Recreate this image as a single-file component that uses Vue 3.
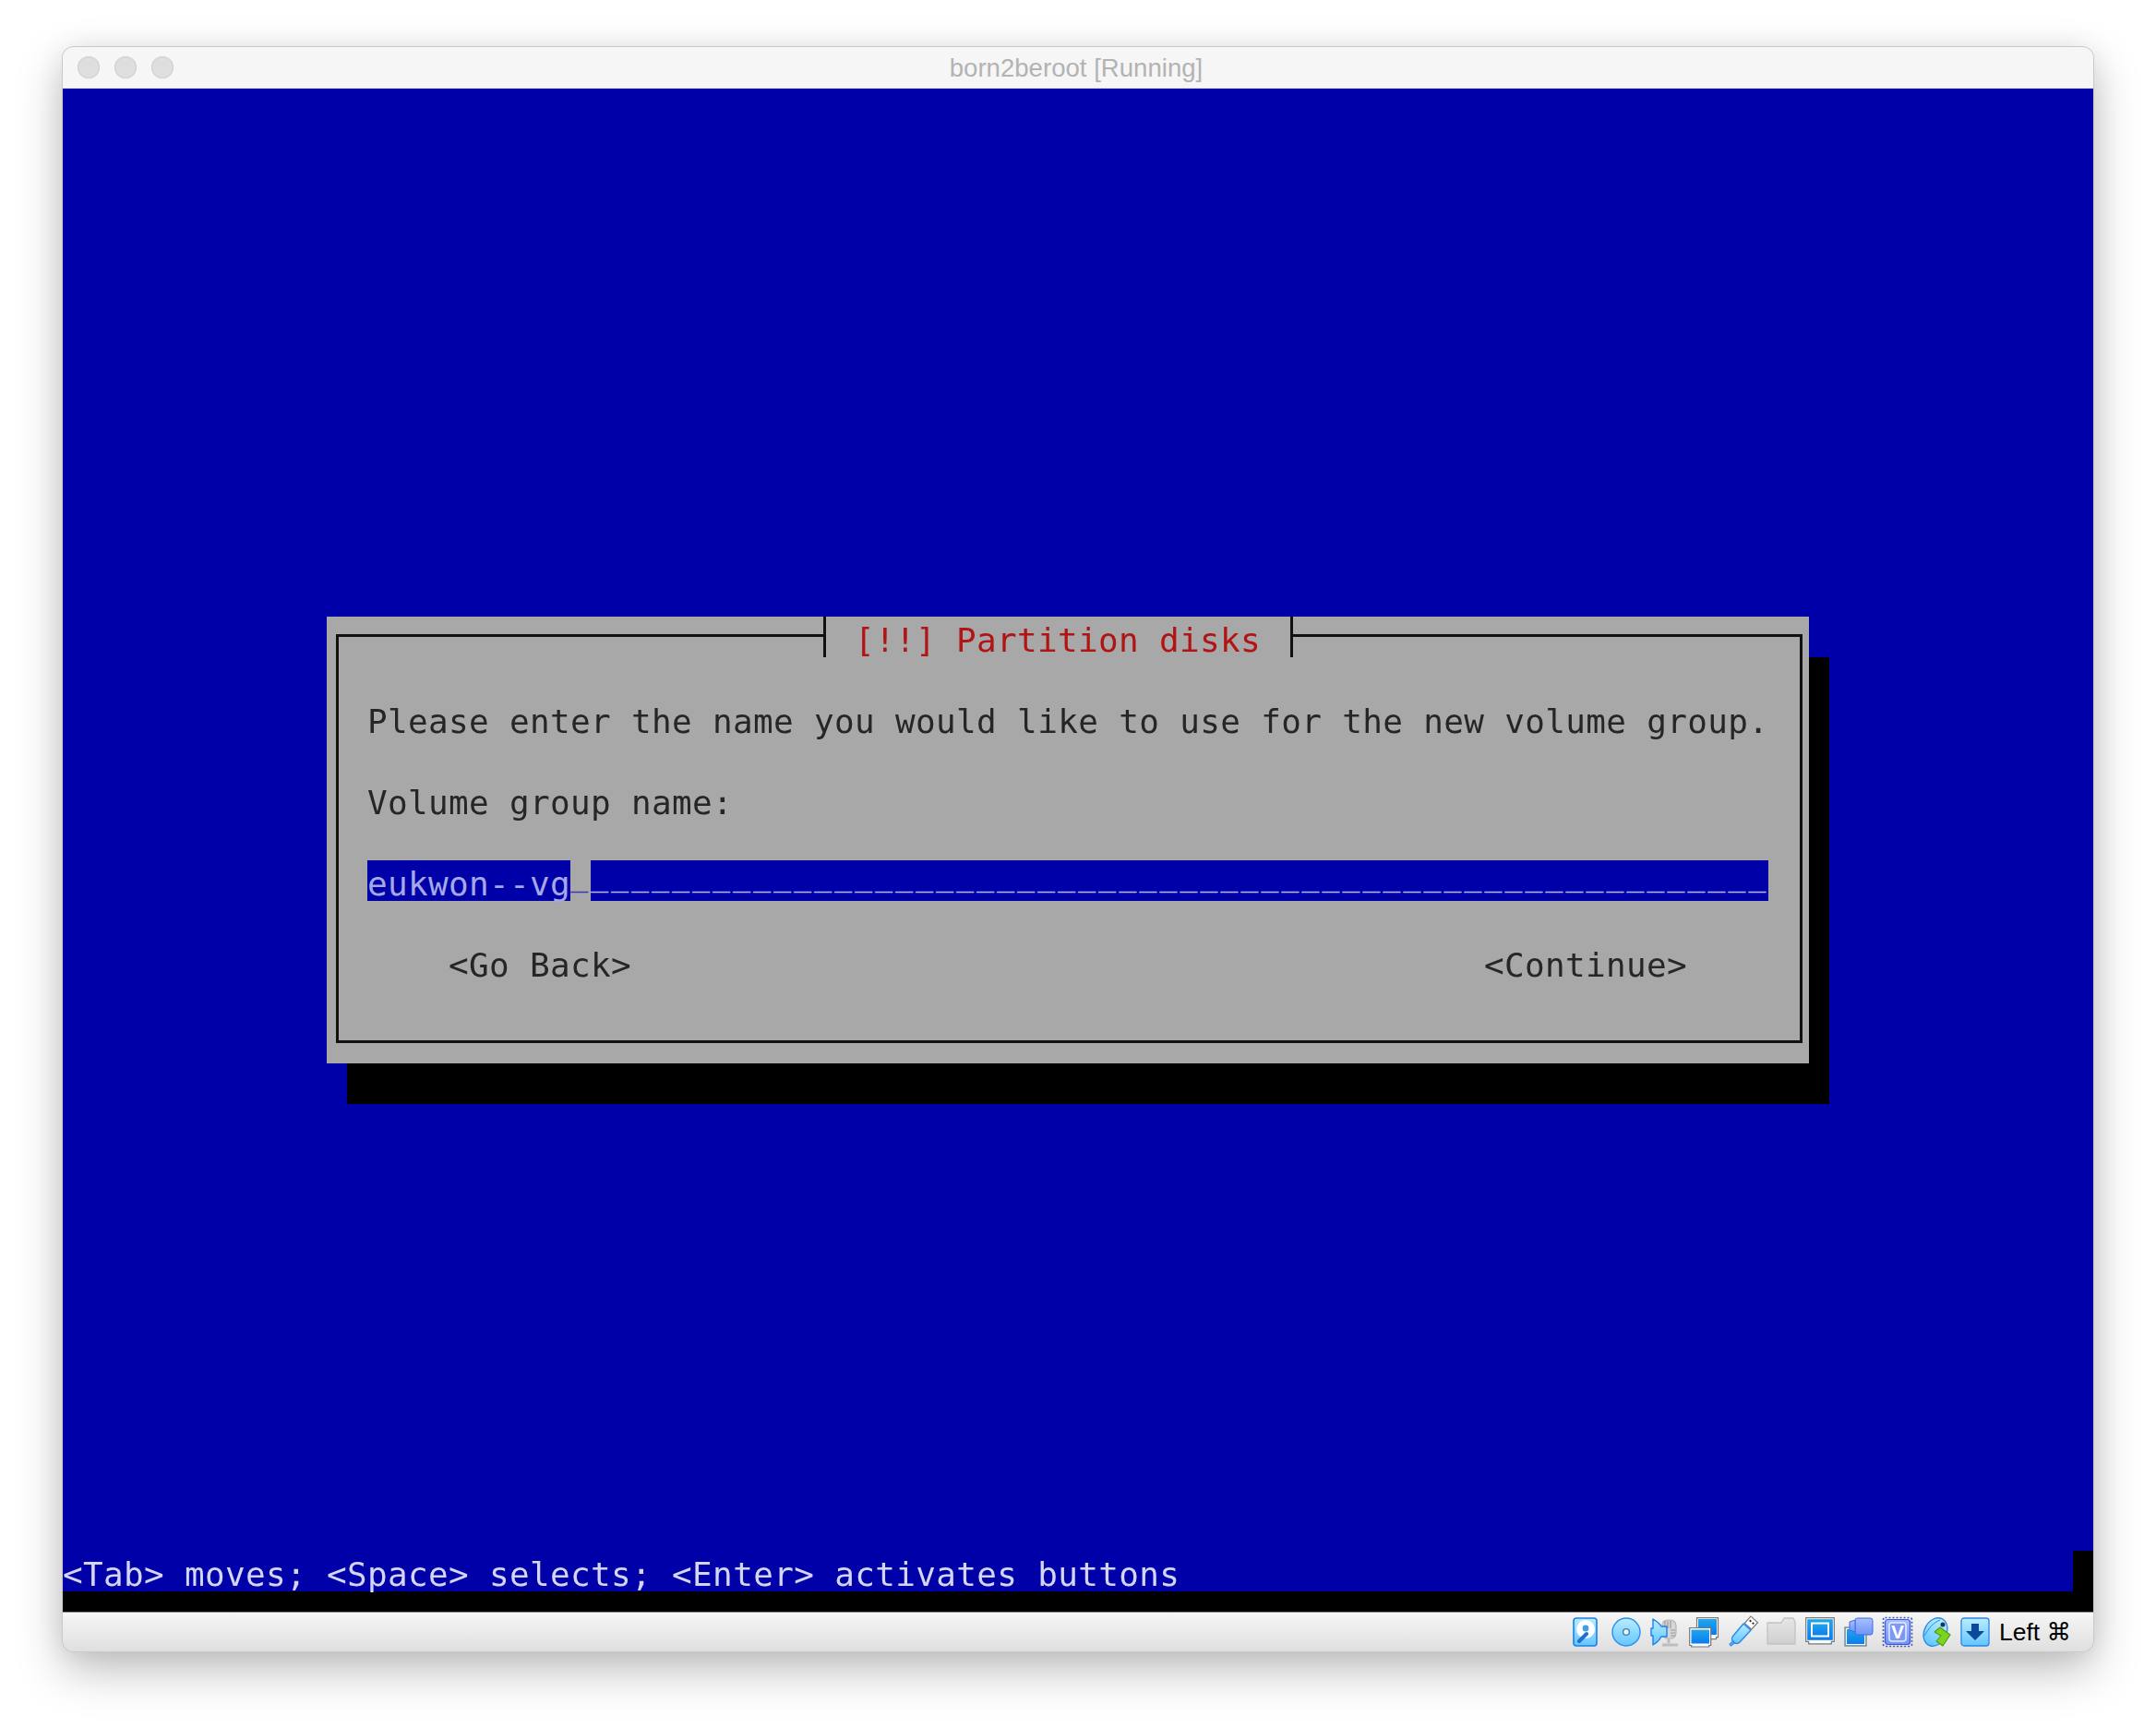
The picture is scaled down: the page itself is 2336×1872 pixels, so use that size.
<script setup>
const underscores = '_'.repeat(58)
</script>

<template>
  <div class="page">
    <svg class="defs" width="0" height="0">
      <defs>
        <linearGradient id="sky" x1="0" y1="0" x2="0" y2="1">
          <stop offset="0" stop-color="#b9ecff" />
          <stop offset="1" stop-color="#62c6ff" />
        </linearGradient>
        <linearGradient id="deep" x1="0" y1="0" x2="0" y2="1">
          <stop offset="0" stop-color="#22a5e8" />
          <stop offset="1" stop-color="#0a7cf0" />
        </linearGradient>
        <linearGradient id="lav" x1="0" y1="0" x2="0" y2="1">
          <stop offset="0" stop-color="#a9c0ff" />
          <stop offset="1" stop-color="#6f93f7" />
        </linearGradient>
        <linearGradient id="grey" x1="0" y1="0" x2="0" y2="1">
          <stop offset="0" stop-color="#e6e6e6" />
          <stop offset="1" stop-color="#cfcfcf" />
        </linearGradient>
      </defs>
    </svg>
    <div class="window">
      <header class="titlebar">
        <div class="lights"><i></i><i></i><i></i></div>
        <div class="wintitle">born2beroot [Running]</div>
      </header>

      <main class="screen">
        <section class="dialog">
          <div class="box">
            <div class="dtitle"><span class="soft">[!!] Partition disks</span></div>
            <p class="line">Please enter the name you would like to use for the new volume group.</p>
            <p class="line">Volume group name:</p>
            <div class="field">
              <span class="sel line">eukwon--vg</span>
              <span class="cursor us">_</span>
              <span class="rest us">{{ underscores }}</span>
            </div>
            <div class="buttons line">
              <span>&lt;Go Back&gt;</span>
              <span>&lt;Continue&gt;</span>
            </div>
          </div>
        </section>
        <div class="hint line">&lt;Tab&gt; moves; &lt;Space&gt; selects; &lt;Enter&gt; activates buttons</div>
        <div class="corner"></div>
        <div class="strip"></div>
      </main>

      <footer class="status">
        <!-- hard disk -->
        <svg class="ico" viewBox="0 0 32 32">
          <rect x="1" y="1" width="25" height="30" rx="3" fill="url(#sky)" stroke="#1f7fe6" stroke-width="1.6" />
          <circle cx="14" cy="13" r="10" fill="#fff" />
          <circle cx="14" cy="12" r="3.4" fill="#3f9fe8" />
          <path d="M15 18 L7 26" stroke="#1f6fd4" stroke-width="4" stroke-linecap="round" />
        </svg>
        <!-- optical disc -->
        <svg class="ico" viewBox="0 0 32 32">
          <circle cx="16" cy="16" r="15" fill="url(#sky)" stroke="#2a8ee8" stroke-width="1.4" />
          <circle cx="16" cy="16" r="3.4" fill="#e8f8ff" stroke="#3d7fa8" stroke-width="1.4" />
        </svg>
        <!-- audio -->
        <svg class="ico" viewBox="0 0 32 32">
          <rect x="13" y="3" width="15" height="20" rx="6" fill="#d6d6d6" stroke="#b4b4b4" stroke-width="1.2" />
          <path d="M16 4v8M19 4v8M22 4v8M22 14h5M22 17h5M22 20h5" stroke="#9a9a9a" stroke-width="1.2" />
          <path d="M20 23v5M13 30h17" stroke="#bdbdbd" stroke-width="3" />
          <path d="M3 2 C8 5 11 8 12 10 L18 10 L18 21 L12 21 C11 23 8 27 3 30 L3 20 L1 20 L1 12 L3 12 Z" fill="url(#sky)" stroke="#1f7fe6" stroke-width="1.4" stroke-linejoin="round" />
        </svg>
        <!-- network -->
        <svg class="ico" viewBox="0 0 32 32">
          <path d="M8.5 .7h23v21h-2v2h-21z" fill="#fff" stroke="#777" stroke-width="1.2" />
          <rect x="10" y="2" width="20" height="17" fill="url(#deep)" />
          <path d="M.7 11.5h23v19h-2v1.5h-19v-1.5h-2z" fill="#fff" stroke="#777" stroke-width="1.2" />
          <rect x="2.5" y="13.5" width="19.5" height="15" fill="url(#deep)" />
        </svg>
        <!-- usb -->
        <svg class="ico" viewBox="0 0 32 32">
          <g transform="rotate(42 20 12)">
            <rect x="15" y="-1" width="10" height="10" fill="#fff" stroke="#777" stroke-width="1.2" />
            <rect x="17" y="2" width="2" height="2" fill="#333" />
            <rect x="21" y="2" width="2" height="2" fill="#333" />
          </g>
          <path d="M17 7 L25 14 L13 27 C11 29 8 29 6 27 C4 25 4 22 6 20 Z" fill="url(#sky)" stroke="#2a86e6" stroke-width="1.4" stroke-linejoin="round" />
          <path d="M6 26 L2 29 L3.5 31 L7 28 Z" fill="#62c6ff" stroke="#2a86e6" stroke-width="1.2" />
        </svg>
        <!-- shared folder (disabled) -->
        <svg class="ico" viewBox="0 0 32 32">
          <path d="M1 6 L1 29 L31 29 L31 5 L29 1 L19 1 L16 6 Z" fill="url(#grey)" stroke="#c2c2c2" stroke-width="1.3" stroke-linejoin="round" />
        </svg>
        <!-- display -->
        <svg class="ico" viewBox="0 0 32 32">
          <path d="M.7 .7h30.6v25.6h-3v2.5H3.7v-2.5H.7z" fill="#fff" stroke="#777" stroke-width="1.2" />
          <rect x="2.2" y="2.2" width="27.6" height="22.6" fill="url(#deep)" />
          <rect x="7" y="6.5" width="18" height="14" fill="url(#deep)" stroke="#fff" stroke-width="2" />
        </svg>
        <!-- video capture -->
        <svg class="ico" viewBox="0 0 32 32">
          <rect x="1" y="11" width="23" height="20" fill="url(#deep)" stroke="#888" stroke-width="1.4" />
          <rect x="2.4" y="12.4" width="20.2" height="17.2" fill="url(#deep)" stroke="#fff" stroke-width="1.2" />
          <rect x="12" y="1" width="19" height="18" rx="2.5" fill="url(#lav)" stroke="#3c6fe0" stroke-width="1" />
          <path d="M6 5 L12 3 L12 16 L6 14 Z" fill="url(#lav)" stroke="#3c6fe0" stroke-width="1" />
        </svg>
        <!-- processor -->
        <svg class="ico" viewBox="0 0 32 32">
          <rect x="0.5" y="0.5" width="31" height="31" rx="2" fill="none" stroke="#3f55c8" stroke-width="1.6" stroke-dasharray="2 2" />
          <rect x="2.5" y="2.5" width="27" height="27" rx="3" fill="url(#lav)" stroke="#4058c8" stroke-width="1.2" />
          <rect x="7" y="6" width="18" height="20" rx="3" fill="#7d98f0" stroke="#e2ebff" stroke-width="1.5" />
          <text x="16" y="23" text-anchor="middle" class="vtext">V</text>
        </svg>
        <!-- guest additions -->
        <svg class="ico" viewBox="0 0 32 32">
          <ellipse cx="15" cy="16" rx="12" ry="16" transform="rotate(28 15 16)" fill="url(#sky)" stroke="#2a86e6" stroke-width="1.3" />
          <path d="M3 20 C8 12 12 6 20 3" fill="none" stroke="#2a86e6" stroke-width="1" />
          <circle cx="23" cy="8" r="2.5" fill="#17365c" />
          <path d="M20 11 L31 19 L23 31 L16 26 L21 20 L14 16 Z" fill="#7ed321" stroke="#4f9a10" stroke-width="1.1" stroke-linejoin="round" />
        </svg>
        <!-- download -->
        <svg class="ico" viewBox="0 0 32 32">
          <rect x="1" y="1" width="30" height="30" rx="3" fill="url(#sky)" stroke="#2a86e6" stroke-width="1.3" />
          <path d="M12 7h8v8h6L16 25 6 15h6z" fill="#0c4a98" />
        </svg>
        <span class="hostkey">Left ⌘</span>
      </footer>
    </div>
  </div>
</template>

<style scoped>
.page {
  width: 2336px;
  height: 1872px;
  padding: 51px 0 0 68px;
  box-sizing: border-box;
  background: #fff;
}
.defs { position: absolute; }
.window {
  width: 2200px;
  height: 1738px;
  border-radius: 12px;
  display: flex;
  flex-direction: column;
  overflow: hidden;
  box-shadow: 0 0 0 1px #c9c9c9, 0 20px 50px rgba(0, 0, 0, .26), 0 0 30px rgba(0, 0, 0, .07);
}
.titlebar {
  flex: none;
  background: #f6f6f6;
  display: flex;
  align-items: center;
  position: relative;
  border-bottom: 1px solid #d8d8d8;
  height: 44px;
}
.lights {
  display: flex;
  gap: 16px;
  margin-left: 16px;
}
.lights i {
  width: 24px;
  height: 24px;
  border-radius: 50%;
  background: #dedede;
  box-shadow: inset 0 0 0 1px #d0d0d0;
}
.wintitle {
  position: absolute;
  left: 0;
  right: 4px;
  top: 1px;
  text-align: center;
  font: 27.6px/44px "Liberation Sans", sans-serif;
  color: #b3b3b3;
}
.screen {
  display: grid;
  grid-template-columns: repeat(100, 22px);
  grid-template-rows: repeat(37, 44px) 22px;
  background: #0000a8;
  flex: none;
}
.dialog {
  grid-column: 14 / 87;
  grid-row: 14 / 25;
  background: #a8a8a8;
  box-shadow: 22px 44px 0 #000;
  padding: 19px 7px 22px 10px;
  box-sizing: border-box;
  display: flex;
}
.box {
  flex: 1;
  position: relative;
  border: 3px solid #111;
  padding: 66px 0 0 31px;
  display: flex;
  flex-direction: column;
  gap: 44px;
}
.line,
.soft {
  font-family: "DejaVu Sans Mono", monospace;
  font-size: 36px;
  letter-spacing: .33px;
  line-height: 52px;
  height: 44px;
  white-space: pre;
  margin: 0;
  color: #262626;
  filter: blur(.4px);
}
.dtitle {
  position: absolute;
  left: 525px;
  top: -22px;
  width: 509px;
  height: 44px;
  box-sizing: border-box;
  padding-left: 31px;
  background: #a8a8a8;
  border-left: 3px solid #111;
  border-right: 3px solid #111;
}
.soft {
  display: block;
  color: #b01414;
}
.field {
  display: flex;
  width: 1518px;
  height: 44px;
}
.field .sel {
  background: #0000a8;
  color: #a4a8e6;
  filter: none;
}
.us {
  font-family: "Liberation Mono", monospace;
  font-size: 32px;
  letter-spacing: 2.8px;
  line-height: 48px;
  white-space: pre;
  color: #b4b4e8;
  display: block;
  height: 44px;
  overflow: hidden;
}
.cursor {
  width: 22px;
  color: #3a3ab8;
}
.rest {
  flex: 1;
  background: #0000a8;
}
.buttons {
  display: flex;
  justify-content: space-between;
  width: 1518px;
  padding: 0 88px;
  box-sizing: border-box;
}
.hint {
  grid-column: 1 / 100;
  grid-row: 37;
  color: #d4d4f4;
}
.corner {
  grid-column: 100;
  grid-row: 37;
  background: #000;
}
.strip {
  grid-column: 1 / -1;
  grid-row: 38;
  background: #000;
}
.status {
  flex: 1;
  box-sizing: border-box;
  border-top: 1px solid #8a8a8a;
  background: linear-gradient(#f6f6f6, #dfdfdf);
  display: flex;
  align-items: center;
  justify-content: flex-end;
  gap: 10px;
  padding-right: 24px;
}
.ico {
  width: 32px;
  height: 32px;
  overflow: visible;
}
.vtext {
  font: bold 21px "Liberation Sans", sans-serif;
  fill: #fff;
}
.hostkey {
  font: 26.5px/32px "Liberation Sans", "DejaVu Sans", sans-serif;
  color: #000;
  white-space: pre;
}
</style>
